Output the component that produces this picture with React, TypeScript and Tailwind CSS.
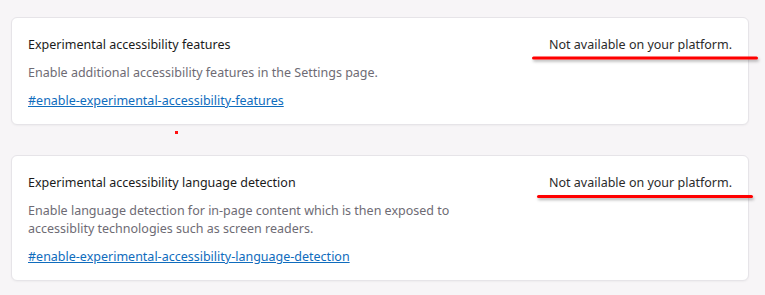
import React from 'react';

type Flag = {
  title: string;
  description: string;
  anchor: string;
};

const flags: Flag[] = [
  {
    title: 'Experimental accessibility features',
    description: 'Enable additional accessibility features in the Settings page.',
    anchor: '#enable-experimental-accessibility-features',
  },
  {
    title: 'Experimental accessibility language detection',
    description:
      'Enable language detection for in-page content which is then exposed to accessiblity technologies such as screen readers.',
    anchor: '#enable-experimental-accessibility-language-detection',
  },
];

function FlagCard({ flag }: { flag: Flag }) {
  return (
    <div className="flex justify-between rounded-md border border-[#e6e4e8] bg-white pl-4 pr-4 pt-[17px] pb-[14px] shadow-[0_1px_2px_rgba(0,0,0,0.04)]">
      <div className="w-[470px]">
        <div className="text-[12.5px] leading-5 text-[#1b1b1b]">{flag.title}</div>
        <p className="mt-[9px] text-[12.5px] leading-[18px] text-[#6e6b74]">{flag.description}</p>
        <a href={flag.anchor} className="mt-[10px] block text-[12.5px] leading-[18px] text-[#0f6cbd] underline">
          {flag.anchor}
        </a>
      </div>
      <div className="text-[12.5px] leading-5 text-[#2b2b2b]">Not available on your platform.</div>
    </div>
  );
}

export default function App() {
  return (
    <div
      className="relative h-[295px] w-[765px] overflow-hidden bg-[#f7f5f7] pl-[11px] pr-[16px] pt-[17px]"
      style={{ fontFamily: '"Noto Sans", "Open Sans", sans-serif' }}
    >
      <div className="flex flex-col gap-[30px]">
        {flags.map((flag) => (
          <FlagCard key={flag.anchor} flag={flag} />
        ))}
      </div>

      {/* red annotation marks */}
      <svg className="pointer-events-none absolute left-0 top-0" width="765" height="295">
        <defs>
          <filter id="sh" filterUnits="userSpaceOnUse" x="0" y="0" width="765" height="295">
            <feDropShadow dx="1" dy="2" stdDeviation="1.5" floodColor="#000" floodOpacity="0.3" />
          </filter>
        </defs>
        <rect x="532" y="56.5" width="226" height="3" rx="1.5" fill="#ff0000" filter="url(#sh)" />
        <rect x="537" y="195" width="216" height="3" rx="1.5" fill="#ff0000" filter="url(#sh)" />
        <rect x="175" y="131" width="3" height="3" fill="#ff1010" />
      </svg>
    </div>
  );
}
